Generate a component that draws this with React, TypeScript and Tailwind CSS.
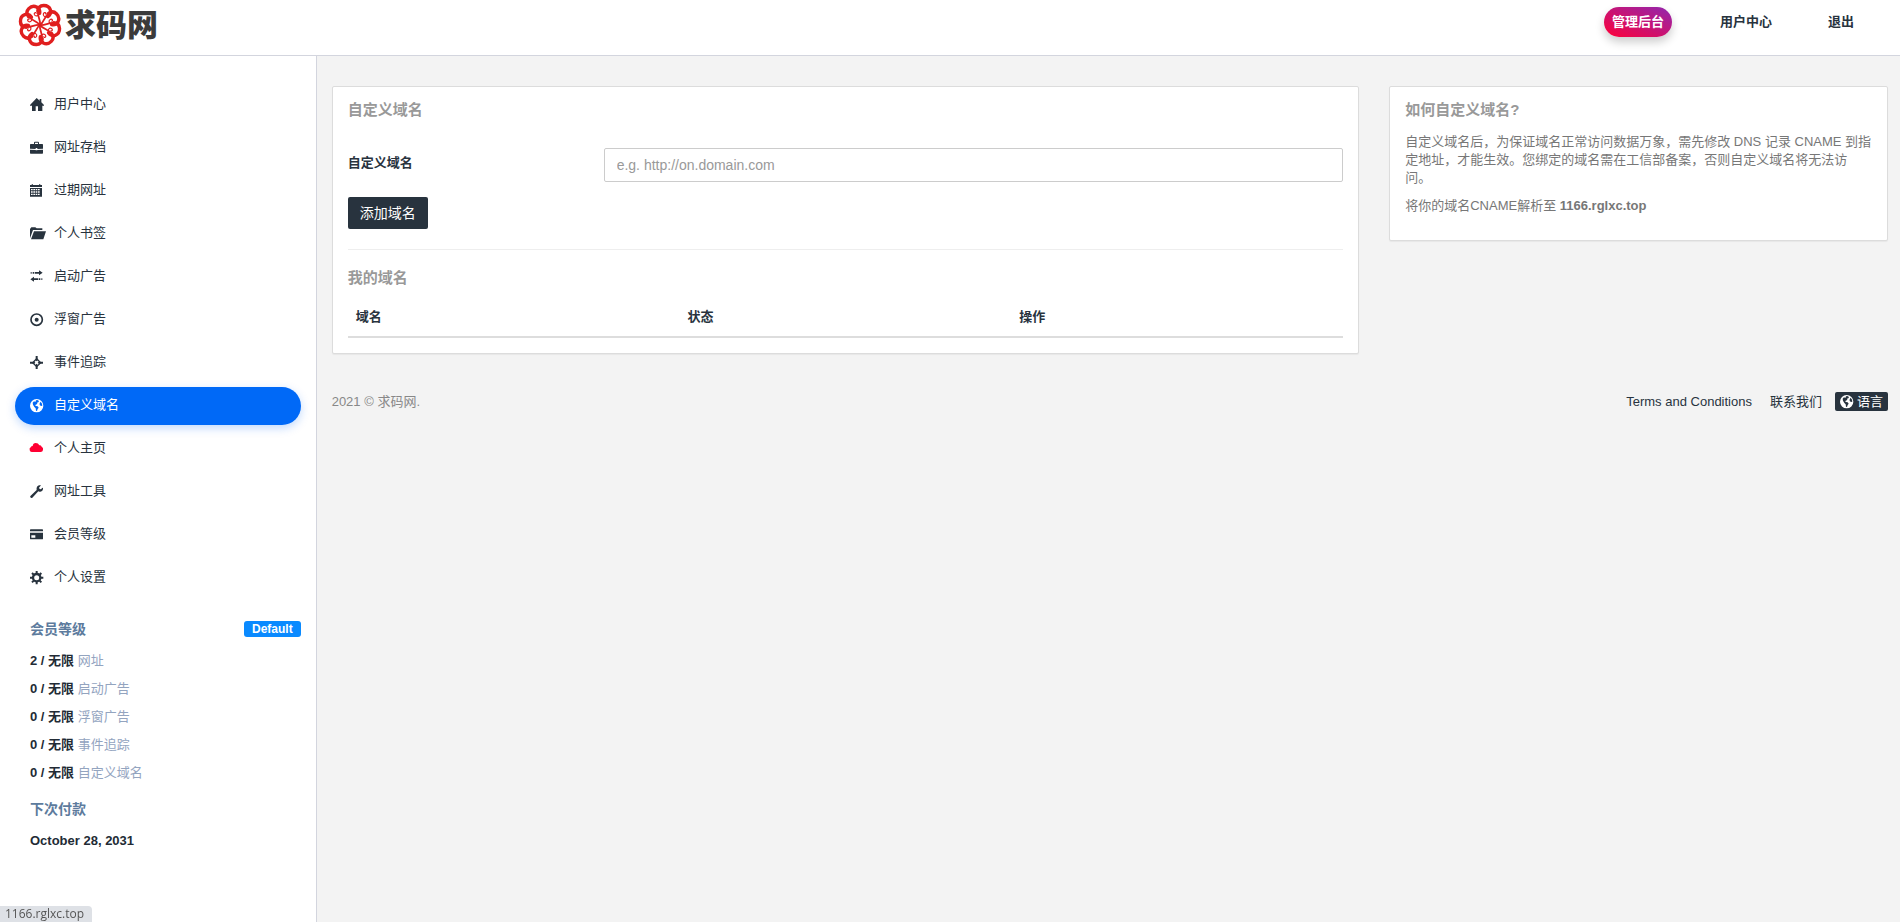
import type { ReactNode } from 'react';

// All menu glyphs share a 42x39 grid, which is 14x13 on screen
const glyphs: Record<string, ReactNode> = {
  home: <path d="M20 0 L29 8 V3 H34 V13 L42 21 V23 H37 V39 H24 V25 H17 V39 H6 V23 H0 V21z" />,
  briefcase: (
    <path
      fillRule="evenodd"
      d="M12 9 V5 Q12 2 15 2 H24 Q27 2 27 5 V9 H37 Q39 9 39 11 V23 L22 24 V21 H17 V24 L0 23 V11 Q0 9 2 9z M15 9 H24 V5 H15z M0 26 L17 27 V28 H22 V27 L39 26 V36 Q39 38 37 38 H2 Q0 38 0 36z"
    />
  ),
  calendar: (
    <path
      fillRule="evenodd"
      d="M0 3 H5 V1 H9 V3 H27 V1 H31 V3 H36 V9 H0z M0 12 H36 V38 H0z M3 15 V19 H8 V15z M10 15 V19 H15 V15z M17 15 V19 H22 V15z M24 15 V19 H29 V15z M3 22 V26 H8 V22z M10 22 V26 H15 V22z M17 22 V26 H22 V22z M24 22 V26 H29 V22z M3 29 V33 H8 V29z M10 29 V33 H15 V29z M17 29 V33 H22 V29z M24 29 V33 H29 V29z"
    />
  ),
  folder: <path d="M0 34 V6 L4 1 H16 L20 4 H37 V9 H9z M12 13 H48 L40 37 H3z" />,
  transfer: (
    <path d="M2 6 H5 V11 H2z M8 6 H13 V11 H8z M15 6 H27 V1 L38 8 L27 16 V11 H15z M12 20 V25 H24 V30 H12 V35 L1 28z M26 25 H31 V30 H26z M34 25 H37 V30 H34z" />
  ),
  record: (
    <>
      <circle cx="20" cy="20" r="17" fill="none" stroke="currentColor" strokeWidth="5" />
      <circle cx="20" cy="20" r="6" />
    </>
  ),
  screenshot: (
    <>
      <path d="M17 0 H23 V13 L20 16 L17 13z M17 39 H23 V26 L20 23 L17 26z M0 17 V23 H13 L16 20 L13 17z M39 17 V23 H26 L23 20 L26 17z" />
      <path d="M20 8 L32 20 L20 32 L8 20z" fill="none" stroke="currentColor" strokeWidth="4" />
    </>
  ),
  globe: (
    <path
      fillRule="evenodd"
      d="M20 0 A20 20 0 1 0 20 40 A20 20 0 1 0 20 0z M18 4 L22 3 L27 6 L25 10 L21 11 L22 14 L18 17 L15 18 L18 21 L23 22 L26 26 L23 30 L21 36 L18 35 L17 28 L13 24 L9 17 L8 11 L12 7 L16 9z M32 8 L36 14 L37 20 L33 21 L29 18 L29 13z"
    />
  ),
  cloud: <path d="M8 30 A8 8 0 0 1 3 15 Q3 12 8 12 Q9 3 17 3 Q25 3 28 10 Q33 8 35 14 Q41 16 39 24 Q38 30 32 30z" />,
  wrench: (
    <path d="M37 8 L39 9 Q40 18 31 20 Q27 21 25 19 L7 38 Q4 40 1 37 Q-1 35 2 32 L20 15 Q18 5 27 1 Q30 0 33 1 L27 8 L29 12 L33 13z" />
  ),
  card: <path fillRule="evenodd" d="M2 4 H37 Q39 4 39 6 V10 H0 V6 Q0 4 2 4z M0 14 H39 V32 Q39 34 37 34 H2 Q0 34 0 32z M4 22 V29 H16 V22z" />,
  cog: (
    <>
      <circle cx="20" cy="20" r="11" fill="none" stroke="currentColor" strokeWidth="7" />
      <path
        d="M20 0 V8 M20 32 V40 M0 20 H8 M32 20 H40 M6 6 L12 12 M28 28 L34 34 M34 6 L28 12 M12 28 L6 34"
        stroke="currentColor"
        strokeWidth="6"
      />
    </>
  ),
};

function Glyph({ name }: { name: string }) {
  return (
    <svg viewBox="0 0 42 39" fill="currentColor" aria-hidden="true" className="h-[13px] w-[14px] shrink-0 overflow-visible">
      {glyphs[name]}
    </svg>
  );
}

const menu = [
  { icon: 'home', label: '用户中心' },
  { icon: 'briefcase', label: '网址存档' },
  { icon: 'calendar', label: '过期网址' },
  { icon: 'folder', label: '个人书签' },
  { icon: 'transfer', label: '启动广告' },
  { icon: 'record', label: '浮窗广告' },
  { icon: 'screenshot', label: '事件追踪' },
  { icon: 'globe', label: '自定义域名', active: true },
  { icon: 'cloud', label: '个人主页', color: 'text-[#ff0033]' },
  { icon: 'wrench', label: '网址工具' },
  { icon: 'card', label: '会员等级' },
  { icon: 'cog', label: '个人设置' },
];

const usage = [
  { count: '2 / 无限', label: '网址' },
  { count: '0 / 无限', label: '启动广告' },
  { count: '0 / 无限', label: '浮窗广告' },
  { count: '0 / 无限', label: '事件追踪' },
  { count: '0 / 无限', label: '自定义域名' },
];

const petals = [12, 57, 102, 147, 192, 237, 282, 327];

function Logo() {
  return (
    <a href="#" className="flex items-start gap-[3px] text-[#3b3b3b]">
      <svg viewBox="0 0 44 44" fill="none" stroke="#e01f1f" strokeLinecap="round" aria-hidden="true" className="size-11">
        {petals.map((angle) => (
          <g key={angle} transform={`rotate(${angle} 22 22)`}>
            <path d="M22 22 C22 17 17 14 17 8" strokeWidth="1.8" />
            <path d="M17 9 C16 1 26 0 29 5 C30.500 8 29.500 10.500 28 12" strokeWidth="3.4" />
            <path d="M28 12 C25.500 14 22.500 12.500 23 10 C23.500 8.500 25.500 8.500 25.300 10" strokeWidth="1.2" />
          </g>
        ))}
      </svg>
      <span className="font-['Noto_Sans_CJK_SC',sans-serif] text-[31px] leading-10 font-black">求码网</span>
    </a>
  );
}

function Header() {
  return (
    <header className="flex h-14 items-start justify-between border-b border-[#d3d5de] bg-white pr-[38px] pl-[18px]">
      <div className="pt-[3px]">
        <Logo />
      </div>
      <nav className="flex gap-10 pt-[7px] font-bold text-[#28333e]">
        <a
          href="#"
          className="rounded-full bg-linear-to-tr/srgb from-[#ff0038] to-[#9027b0] px-2 leading-[30px] text-white shadow-[0_5px_10px_rgba(0,0,0,0.2)]"
        >
          管理后台
        </a>
        <a href="#" className="px-2 leading-[30px]">用户中心</a>
        <a href="#" className="px-2 leading-[30px]">退出</a>
      </nav>
    </header>
  );
}

function Sidebar() {
  return (
    <aside className="w-1/6 shrink-0 border-r border-[#d3d5de] bg-white px-[15px] pt-[30px]">
      <nav className="flex flex-col gap-[5px]">
        {menu.map((item) => (
          <a
            key={item.label}
            href="#"
            className={`flex h-[38px] items-center rounded-full px-[15px] pb-[2px]
              ${item.active ? 'bg-[#0069f7] text-white shadow-[0_3px_10px_rgba(0,105,247,0.25)]' : 'text-[#28333e]'}
            `}
          >
            <span className={`flex w-6 ${item.color ?? ''}`}>
              <Glyph name={item.icon} />
            </span>
            {item.label}
          </a>
        ))}
      </nav>

      <div className="pt-[22px] pl-[15px]">
        <div className="flex items-center justify-between">
          <h3 className="text-sm leading-5 font-bold text-[#5d7b9d]">会员等级</h3>
          <span className="rounded-[3px] bg-[#0a8aff] px-2 text-xs leading-4 font-bold text-white">Default</span>
        </div>
        <ul className="mt-2">
          {usage.map((row) => (
            <li key={row.label} className="leading-7 text-[#93a4bf]">
              <strong className="text-[#222b35]">{row.count}</strong> {row.label}
            </li>
          ))}
        </ul>
        <h3 className="mt-3 text-sm leading-5 font-bold text-[#5d7b9d]">下次付款</h3>
        <p className="mt-2 leading-7 font-bold text-[#222b35]">October 28, 2031</p>
      </div>
    </aside>
  );
}

function Card({ title, className = '', children }: { title: string; className?: string; children: ReactNode }) {
  return (
    <section className={`rounded-[2px] border border-[#dcdcdc] bg-white px-[15px] pt-[11px] shadow-[0_1px_1px_rgba(0,0,0,0.05)] ${className}`}>
      <h2 className="text-[15px] leading-6 font-bold text-[#999]">{title}</h2>
      {children}
    </section>
  );
}

export default function App() {
  return (
    <div className="flex min-h-screen flex-col bg-[#f3f3f3] font-['Liberation_Sans','Noto_Sans_CJK_SC',sans-serif] text-[13px] leading-[18px] text-[#28333e]">
      <Header />
      <div className="flex flex-1">
        <Sidebar />
        <main className="min-w-0 flex-1 pt-[30px] pr-3 pl-[15px]">
          <div className="grid grid-cols-3 items-start gap-[30px]">
            <Card title="自定义域名" className="col-span-2 pb-[15px]">
              <form>
                <div className="mt-[26px] flex items-center">
                  <label htmlFor="domain" className="w-64 shrink-0 pb-1 font-bold">自定义域名</label>
                  <input
                    id="domain"
                    type="text"
                    placeholder="e.g. http://on.domain.com"
                    className="h-[34px] min-w-0 flex-1 rounded-[2px] border border-[#ccc] px-3 text-sm text-[#555] placeholder:text-[#999]"
                  />
                </div>
                <button type="button" className="mt-[15px] h-8 rounded-[2px] bg-[#28333e] px-3 text-sm text-white">
                  添加域名
                </button>
              </form>
              <hr className="mt-5 mb-4 border-[#eee]" />
              <h2 className="text-[15px] leading-6 font-bold text-[#999]">我的域名</h2>
              <table className="mt-[10px] w-full table-fixed text-left">
                <thead>
                  <tr className="border-b-2 border-[#ddd]">
                    <th className="px-2 pt-2 pb-[10px]">域名</th>
                    <th className="px-2 pt-2 pb-[10px]">状态</th>
                    <th className="px-2 pt-2 pb-[10px]">操作</th>
                  </tr>
                </thead>
              </table>
            </Card>

            <Card title="如何自定义域名?" className="pb-[25px] text-[#777]">
              <p className="mt-[11px]">
                自定义域名后，为保证域名正常访问数据万象，需先修改 DNS 记录 CNAME 到指定地址，才能生效。您绑定的域名需在工信部备案，否则自定义域名将无法访问。
              </p>
              <p className="mt-[10px]">
                将你的域名CNAME解析至 <strong>1166.rglxc.top</strong>
              </p>
            </Card>
          </div>

          <footer className="mt-[38px] flex items-center justify-between">
            <p className="text-[#888]">2021 © 求码网.</p>
            <div className="flex items-center">
              <a href="#">Terms and Conditions</a>
              <a href="#" className="ml-[18px]">联系我们</a>
              <button type="button" className="ml-[13px] flex items-center gap-[3px] rounded-[2px] bg-[#28333e] px-[5px] leading-[19px] text-white">
                <Glyph name="globe" />
                语言
              </button>
            </div>
          </footer>
        </main>
      </div>

      {/* Link status bubble of the browser */}
      <div className="fixed bottom-0 left-0 rounded-tr-[4px] bg-[#dee1e6] pr-2 pl-[5px] font-['Open_Sans',sans-serif] text-xs leading-4 text-[#555]">
        1166.rglxc.top
      </div>
    </div>
  );
}
